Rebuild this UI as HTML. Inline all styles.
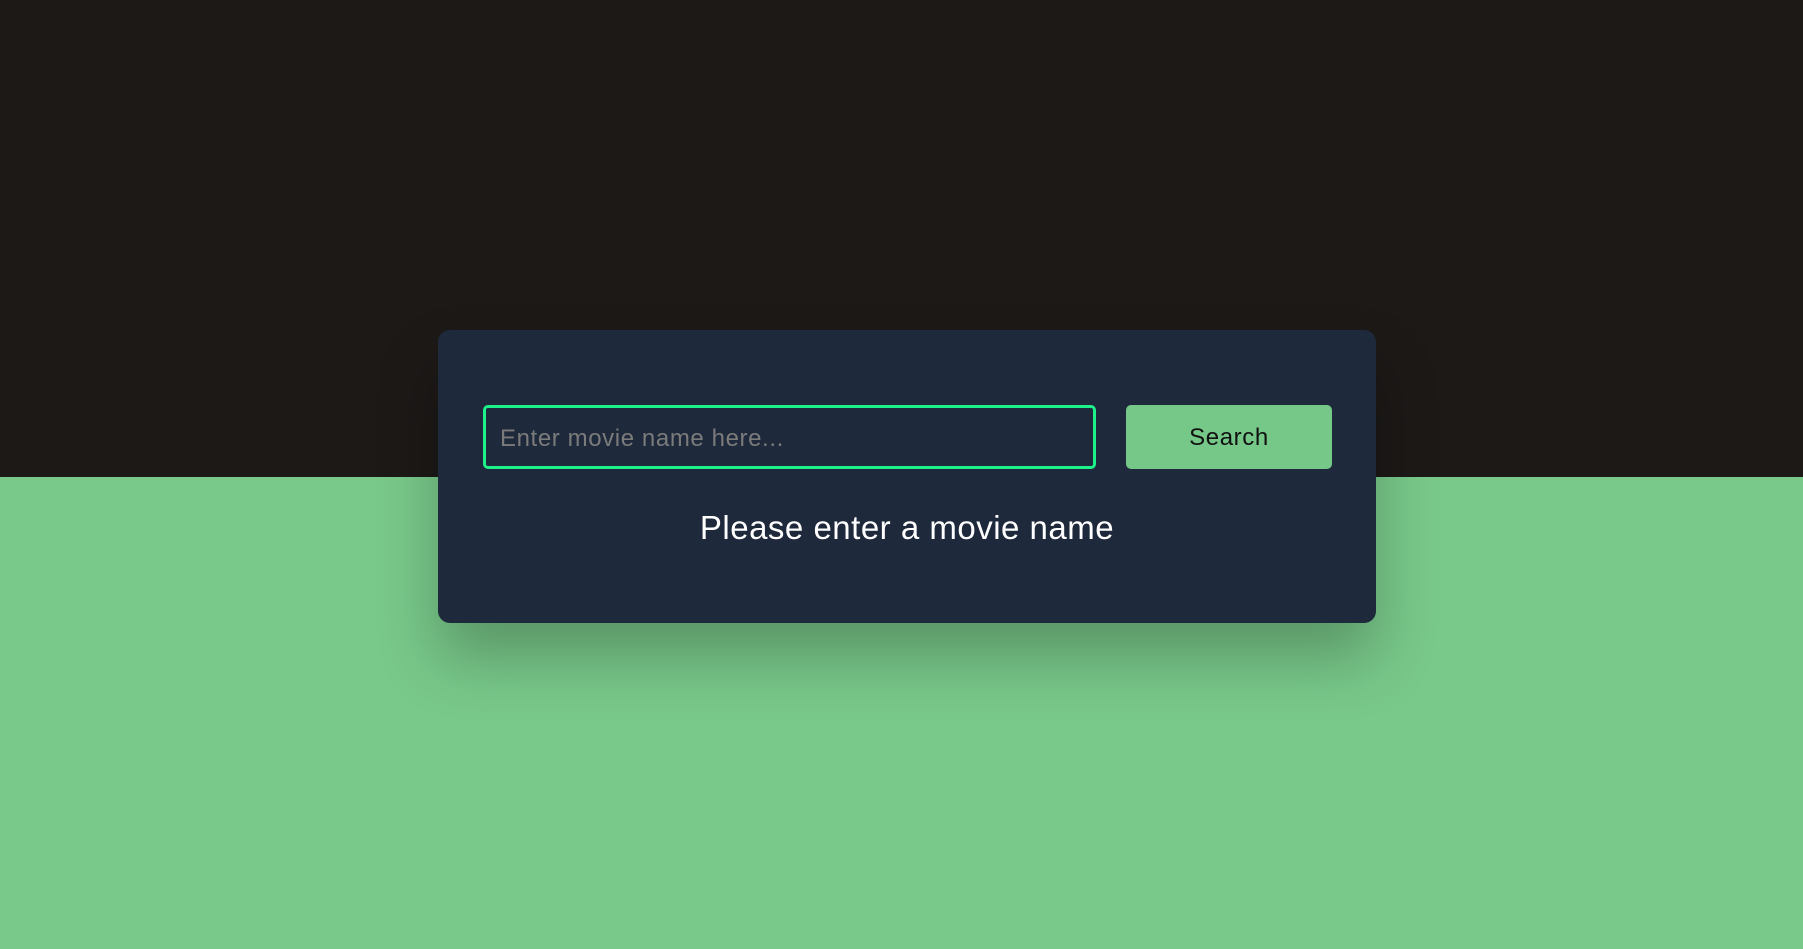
<!DOCTYPE html>
<html><head><meta charset="utf-8"><style>
html,body{margin:0;padding:0;width:1803px;height:949px;overflow:hidden;font-family:"Liberation Sans",sans-serif}
.top{position:absolute;left:0;top:0;width:1803px;height:477px;background:#1c1917}
.bot{position:absolute;left:0;top:477px;width:1803px;height:472px;background:#79c98a}
.card{position:absolute;left:438px;top:330px;width:938px;height:293px;background:#1e293b;border-radius:12px;box-shadow:0 35px 60px rgba(0,0,0,0.25)}
.inp{position:absolute;left:45px;top:75px;height:58px;border:3px solid #1ef08a;border-radius:5px;box-sizing:content-box;color:#7b7b7b;font-size:24px;letter-spacing:0.6px;line-height:62px;padding-left:14px;width:593px}
.btn{position:absolute;left:688px;top:75px;width:206px;height:64px;background:#75c888;border-radius:5px;color:#111;font-size:24px;letter-spacing:0.6px;line-height:66px;text-align:center}
.msg{position:absolute;left:0;width:100%;top:178px;text-align:center;color:#fff;font-size:33px;letter-spacing:0.5px;line-height:40px}
</style></head><body>
<div class="top"></div><div class="bot"></div>
<div class="card">
<div class="inp">Enter movie name here...</div>
<div class="btn">Search</div>
<div class="msg">Please enter a movie name</div>
</div>
</body></html>
